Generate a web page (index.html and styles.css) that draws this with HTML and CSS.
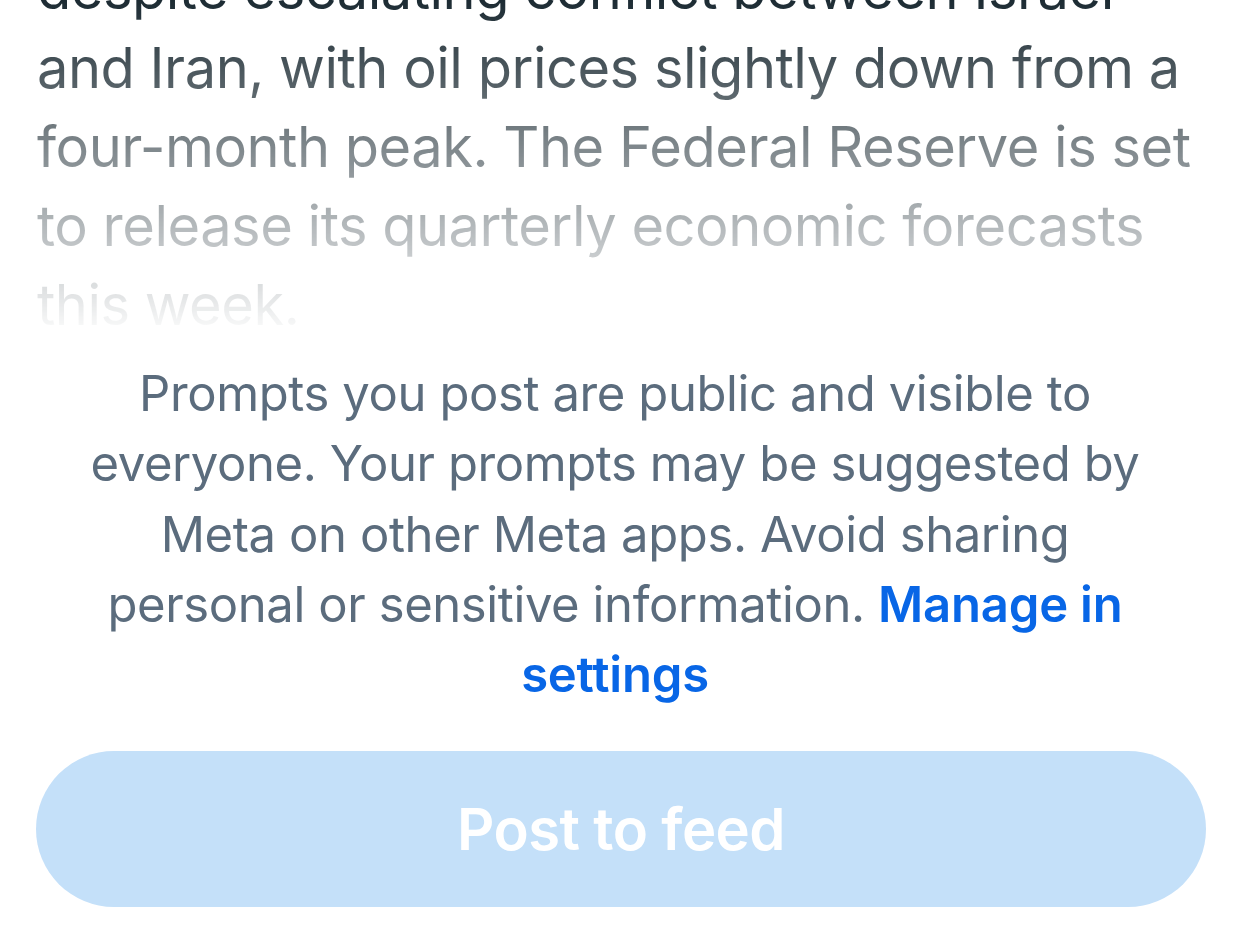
FILE: index.html
```html
<!DOCTYPE html>
<html lang="en">
<head>
<meta charset="utf-8">
<title>Post to feed</title>
<link rel="stylesheet" href="styles.css">
</head>
<body>
<div class="sheet">
  <div class="preview">
    <p class="preview-text">despite escalating conflict between Israel<br>and Iran, with oil prices slightly down from a<br>four-month peak. The Federal Reserve is set<br>to release its quarterly economic forecasts<br>this week.</p>
  </div>
  <p class="notice">Prompts you post are public and visible to everyone. Your prompts may be suggested by Meta on other Meta apps. Avoid sharing personal or sensitive information. <a class="notice-link" href="#">Manage in settings</a></p>
  <div class="actions">
    <button class="post-button" type="button">Post to feed</button>
  </div>
</div>
</body>
</html>
```

FILE: styles.css
```css
html, body {
  margin: 0;
  padding: 0;
  background: #ffffff;
}

body {
  font-family: Inter, "Noto Sans", "Liberation Sans", sans-serif;
  -webkit-font-smoothing: antialiased;
}

.sheet {
  display: flex;
  flex-direction: column;
  width: 1242px;
  height: 932px;
  overflow: hidden;
}

.preview {
  flex: none;
  height: 345px;
  overflow: hidden;
  display: flex;
  flex-direction: column;
  justify-content: flex-end;
  padding: 0 20px 0 37px;
  -webkit-mask-image: linear-gradient(to bottom, #000 0px, rgba(0,0,0,0) 338px);
  mask-image: linear-gradient(to bottom, #000 0px, rgba(0,0,0,0) 338px);
}

.preview-text {
  margin: 0;
  font-size: 56px;
  line-height: 79px;
  letter-spacing: -0.5px;
  white-space: nowrap;
  color: #1c2b33;
}

.notice {
  margin: 14px 0 0;
  padding: 0 94px 0 82px;
  text-align: center;
  font-size: 49px;
  line-height: 70.3px;
  letter-spacing: -0.4px;
  color: #5b6c7d;
}

.notice-link {
  color: #0866e6;
  font-weight: 600;
  letter-spacing: -0.2px;
  text-decoration: none;
}

.actions {
  display: flex;
  padding: 41px 36px 0 36px;
}

.post-button {
  flex: 1;
  height: 156px;
  border: none;
  border-radius: 78px;
  background: #c4e0f9;
  color: #ffffff;
  font-family: Inter, "Noto Sans", "Liberation Sans", sans-serif;
  font-size: 58px;
  font-weight: 600;
  letter-spacing: -0.6px;
  padding: 0;
}
```
